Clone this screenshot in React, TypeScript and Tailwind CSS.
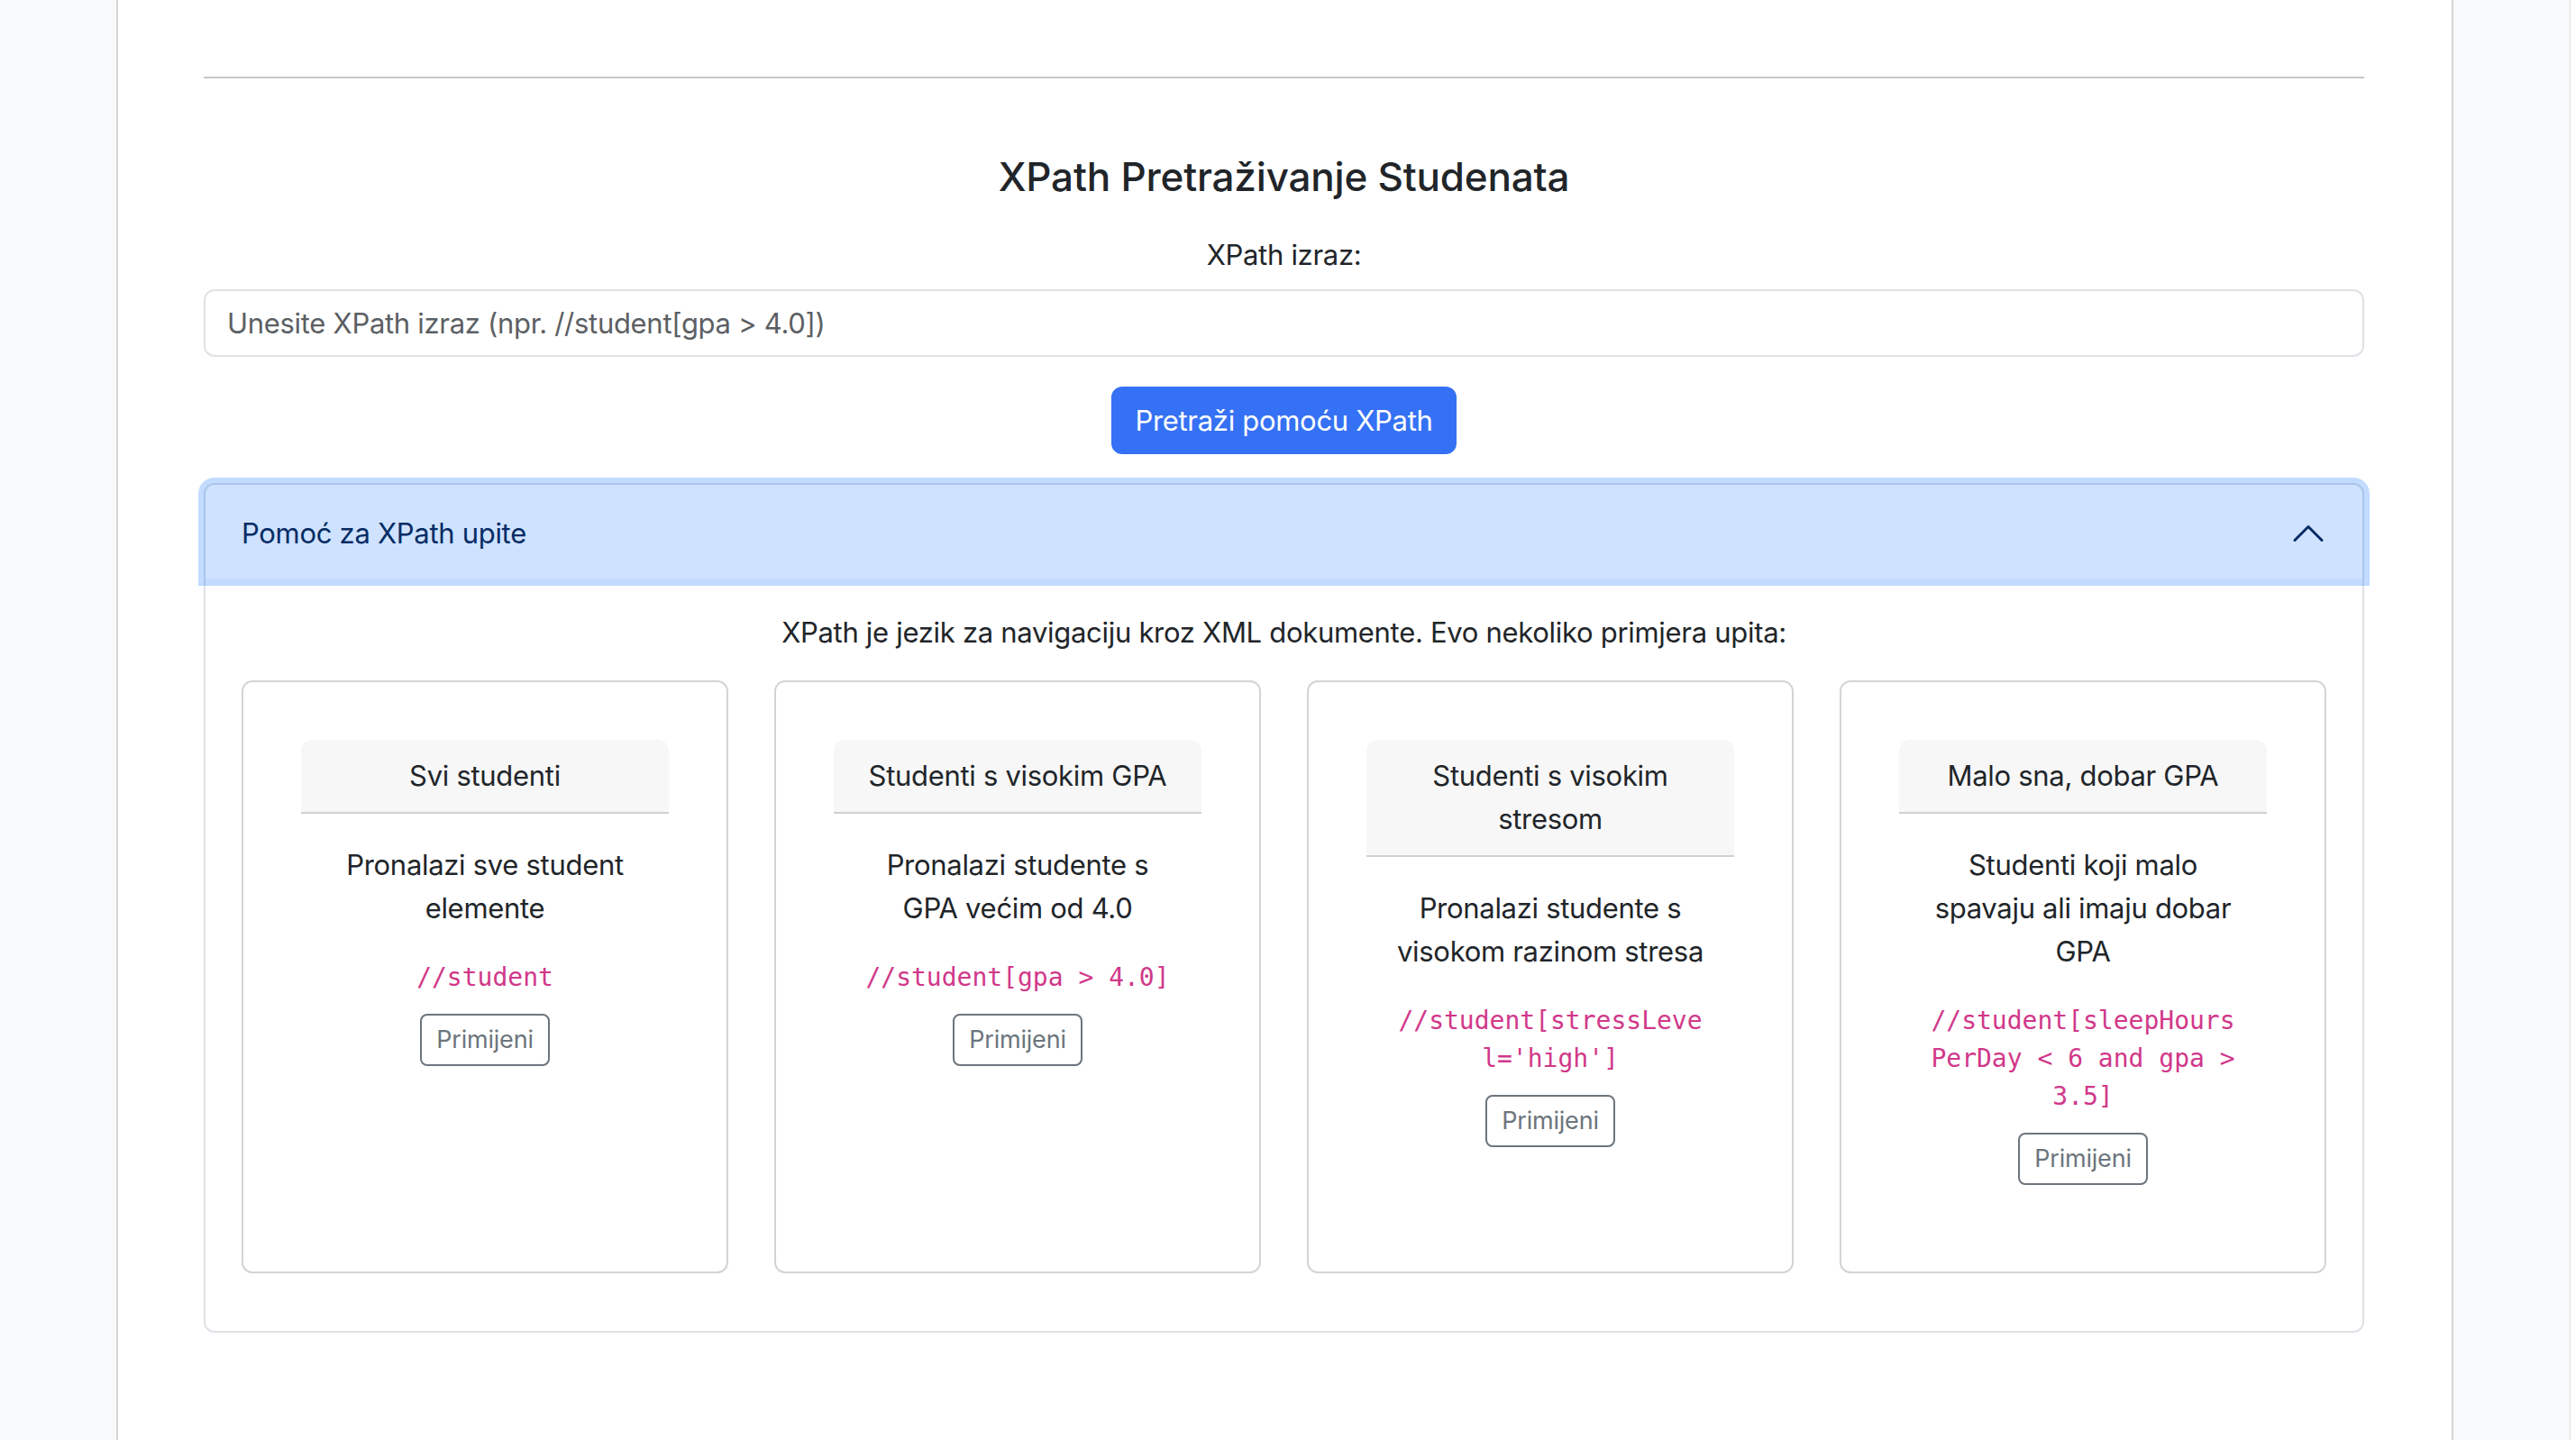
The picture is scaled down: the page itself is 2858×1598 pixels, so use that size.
import React from "react";

type Example = {
  title: string;
  description: string;
  query: string;
};

const examples: Example[] = [
  {
    title: "Svi studenti",
    description: "Pronalazi sve student elemente",
    query: "//student",
  },
  {
    title: "Studenti s visokim GPA",
    description: "Pronalazi studente s GPA većim od 4.0",
    query: "//student[gpa > 4.0]",
  },
  {
    title: "Studenti s visokim stresom",
    description: "Pronalazi studente s visokom razinom stresa",
    query: "//student[stressLevel='high']",
  },
  {
    title: "Malo sna, dobar GPA",
    description: "Studenti koji malo spavaju ali imaju dobar GPA",
    query: "//student[sleepHoursPerDay < 6 and gpa > 3.5]",
  },
];

function ChevronUp() {
  return (
    <svg width="40" height="40" viewBox="0 0 16 16" fill="none" className="shrink-0">
      <path d="M2 11L8 5L14 11" stroke="#052c65" strokeWidth="1.2" strokeLinecap="round" strokeLinejoin="round" />
    </svg>
  );
}

function ExampleCard({ example }: { example: Example }) {
  return (
    <div className="h-full rounded-[12px] border-2 border-[#d4d4d4] bg-white p-[64px]">
      <div className="rounded-t-[12px] border-b-2 border-[#d0d0d0] bg-[#f7f7f7] px-[32px] py-[16px] text-center text-[31px] leading-[48px] tracking-[-0.3px] text-[#212529]">
        {example.title}
      </div>
      <div className="flex flex-col items-center px-[32px] pb-[32px] pt-[33px] text-center">
        <p className="mb-[32px] text-[31px] leading-[48px] tracking-[-0.3px] text-[#212529]">{example.description}</p>
        <code className="mb-[19px] block w-full break-words font-['DejaVu_Sans_Mono',monospace] text-[28px] leading-[42px] text-[#d1388a]">
          {example.query}
        </code>
        <button
          type="button"
          className="rounded-[8px] border-2 border-[#6c757d] bg-white px-[16px] py-[6px] text-[27px] leading-[42px] tracking-[-0.2px] text-[#6c757d]"
        >
          Primijeni
        </button>
      </div>
    </div>
  );
}

export default function App() {
  return (
    <main className="flex min-h-screen bg-[#f8f9fa] font-['Inter','Noto_Sans',sans-serif] text-[#212529]">
      <div className="w-[129px] shrink-0" />

      <div className="min-h-screen w-[2593px] shrink-0 border-x-2 border-[#d4d4d4] bg-white pl-[95px] pr-[97px] pt-[85px]">
        <hr className="border-t-2 border-[#c8c8c8]" />

        <h2 className="mt-[82px] text-center text-[44px] font-medium leading-[54px] tracking-[-0.2px]">
          XPath Pretraživanje Studenata
        </h2>

        <label className="mb-[14px] mt-[36px] block text-center text-[31px] leading-[48px] tracking-[-0.3px]">XPath izraz:</label>
        <input
          className="block h-[75px] w-full rounded-[12px] border-2 border-[#dee2e6] px-[24px] text-[31px] tracking-[-0.3px] text-[#212529] outline-none placeholder:text-[#5c5f63]"
          placeholder="Unesite XPath izraz (npr. //student[gpa > 4.0])"
        />

        <div className="mt-[33px] flex justify-center">
          <button
            type="button"
            className="h-[75px] rounded-[12px] border-2 border-[#3571f4] bg-[#3571f4] px-[24px] text-[31px] leading-[48px] tracking-[-0.3px] text-white"
          >
            Pretraži pomoću XPath
          </button>
        </div>

        <div className="mt-[32px] rounded-[12px] border-2 border-[#dee2e6]">
          <button
            type="button"
            className="relative z-10 flex h-[104px] w-full items-center justify-between rounded-t-[10px] bg-[#cfe2ff] px-[40px] pt-[4px] text-left text-[31px] leading-[48px] tracking-[-0.3px] text-[#052c65] shadow-[0_0_0_8px_rgba(13,110,253,0.25)]"
          >
            <span>Pomoć za XPath upite</span>
            <ChevronUp />
          </button>

          <div className="px-[40px] pb-[64px] pt-[36px]">
            <p className="mb-[29px] text-center text-[31px] leading-[48px] tracking-[-0.3px]">
              XPath je jezik za navigaciju kroz XML dokumente. Evo nekoliko primjera upita:
            </p>
            <div className="grid grid-cols-4 gap-[51px]">
              {examples.map((example) => (
                <ExampleCard key={example.title} example={example} />
              ))}
            </div>
          </div>
        </div>
      </div>

      <div className="flex-1" />
      <div className="w-[7px] shrink-0 border-l border-[#e2e2e2] bg-white" />
    </main>
  );
}
